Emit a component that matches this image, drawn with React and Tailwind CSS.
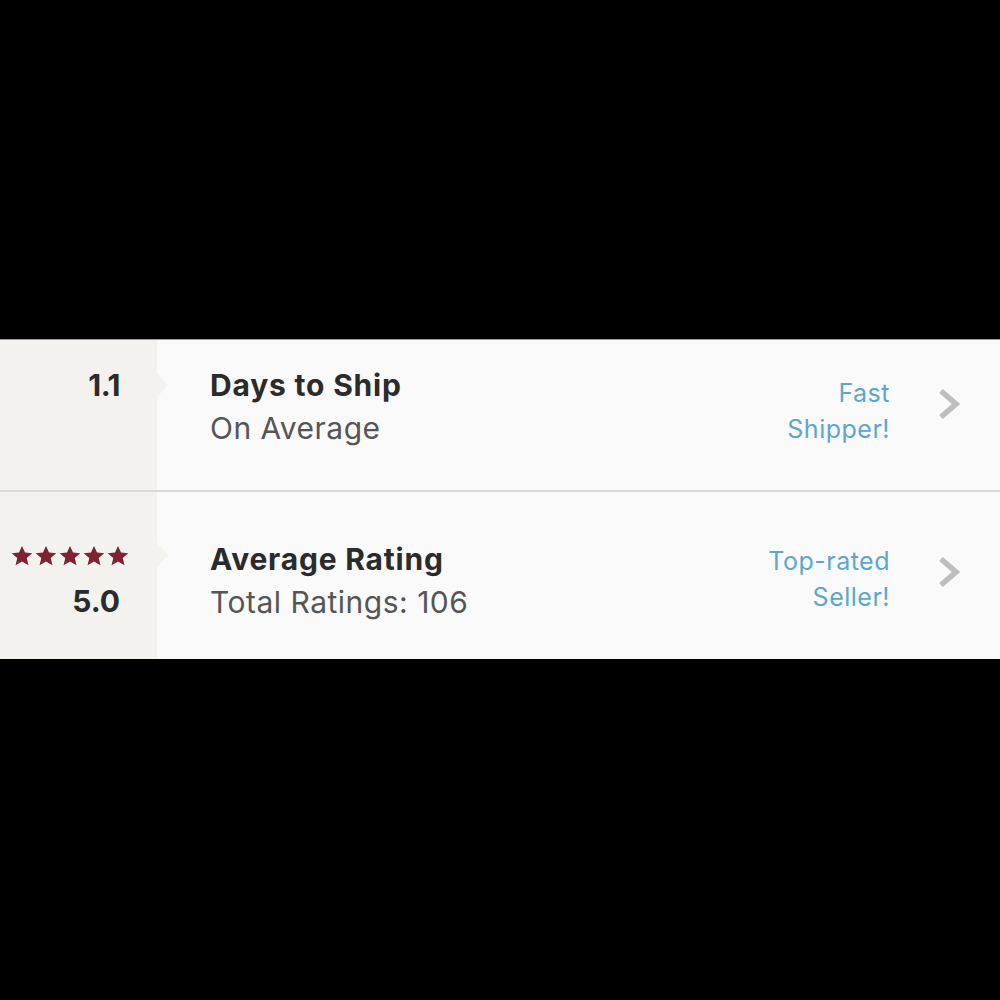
import React from "react";

function Chevron() {
  return (
    <svg width="24" height="32" viewBox="0 0 24 32" className="block">
      <path d="M4 3 L19 16 L4 29" fill="none" stroke="#bdbdbd" strokeWidth="5.5" />
    </svg>
  );
}

function Stars() {
  return (
    <div className="flex justify-end gap-[2px]">
      {[0, 1, 2, 3, 4].map((i) => (
        <svg key={i} width="22" height="22" viewBox="0 0 24 24">
          <path
            d="M12 1l3.3 7.2 7.9.8-6 5.3 1.8 7.8L12 18.1l-7 4 1.8-7.8-6-5.3 7.9-.8z"
            fill="#7b2233"
          />
        </svg>
      ))}
    </div>
  );
}

function Row({ height, left, title, subtitle, badge, pads }) {
  return (
    <div className="flex" style={{ height }}>
      <div className="relative w-[157px] shrink-0 bg-[#f3f2ef] pr-[37px] text-right">
        <div style={{ paddingTop: pads.left }}>{left}</div>
        <div
          className="absolute left-full h-0 w-0 border-y-[12px] border-l-[11px] border-y-transparent border-l-[#f3f2ef]"
          style={{ top: pads.notch }}
        />
      </div>
      <div className="flex flex-1 bg-[#fafafa] pl-[53px]">
        <div className="text-[30px] leading-[43px]" style={{ paddingTop: pads.title }}>
          <div className="font-bold tracking-[0.8px] text-[#2b2b2b]">{title}</div>
          <div className="tracking-[0.5px] text-[#555555]">{subtitle}</div>
        </div>
        <div
          className="ml-auto text-right text-[25px] leading-[36px] tracking-[0.5px] text-[#5aa7d0]"
          style={{ paddingTop: pads.badge }}
        >
          {badge.map((b) => (
            <div key={b}>{b}</div>
          ))}
        </div>
        <div className="ml-[47px] mr-[39px]" style={{ paddingTop: pads.chevron }}>
          <Chevron />
        </div>
      </div>
    </div>
  );
}

export default function App() {
  return (
    <div
      className="flex h-[1000px] w-[1000px] flex-col bg-black pt-[339px]"
      style={{ fontFamily: "Inter, 'Open Sans', sans-serif" }}
    >
      <div className="h-px bg-[#9a9a9a]" />
      <Row
        height={150}
        left={<div className="text-[30px] font-bold leading-[43px] tracking-[-0.5px] text-[#2b2b2b]">1.1</div>}
        title="Days to Ship"
        subtitle="On Average"
        badge={["Fast", "Shipper!"]}
        pads={{ left: 24, notch: 33, title: 24, badge: 35, chevron: 48 }}
      />
      <div className="h-[2px] bg-[#d9d9d9]" />
      <Row
        height={167}
        left={
          <div>
            <div className="mr-[-9px]">
              <Stars />
            </div>
            <div className="mt-[13px] text-[30px] font-bold leading-[43px] text-[#2b2b2b]">5.0</div>
          </div>
        }
        title="Average Rating"
        subtitle="Total Ratings: 106"
        badge={["Top-rated", "Seller!"]}
        pads={{ left: 53, notch: 51, title: 46, badge: 51, chevron: 64 }}
      />
    </div>
  );
}
